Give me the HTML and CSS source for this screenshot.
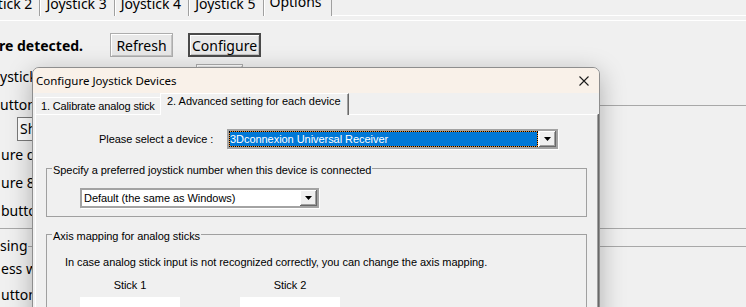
FILE: index.html
```html
<!DOCTYPE html>
<html lang="en">
<head>
  <meta charset="UTF-8">
  <title>Joystick Options</title>
  <link rel="stylesheet" href="styles.css">
</head>
<body>

  <div class="tabbar">
    <div class="tab first">Joystick 2</div>
    <div class="tab">Joystick 3</div>
    <div class="tab">Joystick 4</div>
    <div class="tab">Joystick 5</div>
    <div class="tab active">Options</div>
    <div class="tab-fill"></div>
  </div>

  <div class="panel">
    <div class="row-status">
      <span class="status">re detected.</span>
      <button class="btn refresh">Refresh</button>
      <button class="btn configure">Configure</button>
    </div>

    <div class="row-number">
      <span class="number-label">ystick</span>
      <button class="btn small"></button>
    </div>

    <fieldset class="group buttons">
      <legend>uttons</legend>
      <div class="mini-combo">Sho</div>
      <div class="line">ure de</div>
      <div class="line">ure 8-w</div>
      <div class="line">button</div>
    </fieldset>

    <fieldset class="group pressing">
      <legend>sing</legend>
      <div class="line short">ess wh</div>
      <div class="line short">utton</div>
    </fieldset>
  </div>

  <div class="dialog">
    <div class="titlebar">
      <span class="title">Configure Joystick Devices</span>
      <svg class="close" width="10" height="10" viewBox="0 0 10 10">
        <path d="M0.5 0.5 L9.5 9.5 M9.5 0.5 L0.5 9.5" stroke="#1b1b1b" stroke-width="1.1" fill="none"/>
      </svg>
    </div>

    <div class="dtabs">
      <div class="dtab">1. Calibrate analog stick</div>
      <div class="dtab selected">2. Advanced setting for each device</div>
    </div>

    <div class="dpanel">
      <div class="device-row">
        <span class="device-label">Please select a device :</span>
        <div class="combo wide">
          <div class="combo-field focused">3Dconnexion Universal Receiver</div>
          <div class="combo-btn">
            <svg width="7" height="4" viewBox="0 0 7 4"><polygon points="0,0 7,0 3.5,4" fill="#000"/></svg>
          </div>
        </div>
      </div>

      <fieldset class="dgroup preferred">
        <legend>Specify a preferred joystick number when this device is connected</legend>
        <div class="combo narrow">
          <div class="combo-field">Default (the same as Windows)</div>
          <div class="combo-btn">
            <svg width="7" height="4" viewBox="0 0 7 4"><polygon points="0,0 7,0 3.5,4" fill="#000"/></svg>
          </div>
        </div>
      </fieldset>

      <fieldset class="dgroup axis">
        <legend>Axis mapping for analog sticks</legend>
        <p class="hint">In case analog stick input is not recognized correctly, you can change the axis mapping.</p>
        <div class="sticks">
          <div class="stick">
            <div class="stick-name">Stick 1</div>
            <div class="stick-box"></div>
          </div>
          <div class="stick">
            <div class="stick-name">Stick 2</div>
            <div class="stick-box"></div>
          </div>
        </div>
      </fieldset>
    </div>
  </div>

</body>
</html>
```

FILE: styles.css
```css
body {
  margin: 0;
  height: 307px;
  overflow: hidden;
  position: relative;
  background-color: #f0f0f0;
  font-family: "Noto Sans", "Open Sans", sans-serif;
  font-size: 14px;
  color: #000;
}

/* main window tabs */
.tabbar {
  display: flex;
  height: 20px;
  margin-top: -4px;
  margin-left: -34px;
}

.tab {
  padding: 0 7px 0 6px;
  line-height: 16px;
  border-right: 1px solid #a0a0a0;
  box-shadow: inset 1px 0 #fff;
  white-space: nowrap;
}

.tab.active {
  margin-top: -2px;
  padding: 0 9px 0 6px;
}

.tab-fill {
  flex: 1;
  border-bottom: 1px solid #fff;
}

.panel {
  margin-top: 4px;
  border-top: 1px solid #fff;
}

.row-status {
  display: flex;
  align-items: center;
  height: 24px;
  margin-top: 12px;
}

.status {
  width: 111px;
  margin-left: -1px;
  font-weight: 700;
  white-space: nowrap;
}

.btn {
  height: 24px;
  box-sizing: border-box;
  padding: 0;
  font-family: inherit;
  font-size: 14px;
  color: #000;
  background-color: #e9e9e9;
  border: 1px solid #adadad;
  box-shadow: inset 1px 1px #fff, inset -1px -1px #c4c4c4;
}

.refresh {
  width: 63px;
}

.configure {
  width: 73px;
  margin-left: 15px;
  border: 2px solid #4a4a4a;
}

.row-number {
  display: flex;
  align-items: center;
  height: 24px;
  margin-top: 7px;
}

.number-label {
  width: 196px;
  white-space: nowrap;
}

.btn.small {
  width: 47px;
}

/* main window group boxes */
.group {
  margin: 9px -20px 0 -20px;
  padding: 0 20px 3px 20px;
  border: 1px solid #a8a8a8;
}

.group legend {
  padding: 0;
  margin-left: -1px;
  line-height: 16px;
}

.mini-combo {
  width: 120px;
  height: 24px;
  box-sizing: border-box;
  margin: 4px 0 0 16px;
  padding-left: 2px;
  line-height: 22px;
  background-color: #fff;
  border: 1px solid #7a7a7a;
}

.line {
  height: 28px;
  line-height: 28px;
  white-space: nowrap;
}

.pressing {
  margin-top: 9px;
}

.line.short {
  height: 26px;
  line-height: 26px;
}

.pressing .line.short:first-of-type {
  margin-top: 2px;
}

/* dialog */
.dialog {
  position: absolute;
  left: 32px;
  top: 67px;
  width: 566px;
  height: 270px;
  background-color: #f0f0f0;
  border: 1px solid #8e8e8e;
  border-radius: 7px 7px 0 0;
  box-shadow: 0 6px 26px rgba(0, 0, 0, 0.28);
  font-family: "Liberation Sans", Arial, sans-serif;
  font-size: 11px;
  letter-spacing: -0.05px;
}

.titlebar {
  display: flex;
  align-items: center;
  height: 25px;
  padding-left: 3px;
  background-color: #f9f1e9;
  border-radius: 6px 6px 0 0;
}

.title {
  font-family: "Noto Sans", "Open Sans", sans-serif;
  font-size: 11.5px;
  letter-spacing: 0;
}

.close {
  margin-left: auto;
  margin-right: 10px;
}

.dtabs {
  display: flex;
  align-items: flex-end;
  height: 21px;
  padding-left: 2px;
}

.dtab {
  height: 17px;
  box-sizing: border-box;
  padding: 2px 0 0 5px;
  line-height: 13px;
  letter-spacing: -0.15px;
  border-top: 1px solid #fff;
  border-left: 1px solid #fff;
  white-space: nowrap;
}

.dtab:first-child {
  width: 125px;
}

.dtab.selected {
  position: relative;
  width: 189px;
  height: 22px;
  margin-bottom: -1px;
  padding: 1px 0 0 6px;
  letter-spacing: 0;
  background-color: #f0f0f0;
  border-right: 1px solid #696969;
  box-shadow: inset -1px 0 #a0a0a0;
}

.dpanel {
  height: 240px;
  margin: 0 1px 0 2px;
  border-top: 1px solid #fff;
  border-left: 1px solid #fff;
  border-right: 1px solid #a0a0a0;
  box-shadow: 1px 0 #696969;
}

.device-row {
  display: flex;
  align-items: center;
  padding: 14px 0 0 63px;
}

.device-label {
  width: 128px;
  white-space: nowrap;
}

.combo {
  display: flex;
  height: 20px;
  box-sizing: border-box;
  border: 2px solid #a3a3a3;
  background-color: #fff;
  box-shadow: 1px 1px #fff;
}

.combo.wide {
  width: 331px;
}

.combo.narrow {
  width: 239px;
  margin: 11px 0 0 28px;
}

.combo-field {
  flex: 1;
  padding-left: 2px;
  line-height: 16px;
  white-space: nowrap;
  overflow: hidden;
}

.combo-field.focused {
  margin-right: 1px;
  padding-left: 0;
  line-height: 14px;
  color: #fff;
  border: 1px dotted #000;
  background: linear-gradient(#0078d7, #0078d7) padding-box, #f0902c border-box;
}

.combo-btn {
  display: flex;
  align-items: center;
  justify-content: center;
  width: 17px;
  box-sizing: border-box;
  background-color: #f0f0f0;
  border-right: 1px solid #696969;
  border-bottom: 1px solid #696969;
  box-shadow: inset 1px 1px #fff, inset -1px -1px #a0a0a0;
}

.dgroup {
  margin: 10px 10px 0 10px;
  padding: 0 5px 8px 5px;
  border: 1px solid #a0a0a0;
}

.dgroup legend {
  padding: 4px 1px 0 1px;
  line-height: 14px;
}

.axis {
  margin-top: 8px;
}

.hint {
  margin: 12px 0 0 13px;
  line-height: 14px;
  white-space: nowrap;
}

.sticks {
  display: flex;
  gap: 60px;
  margin: 9px 0 0 28px;
}

.stick {
  width: 100px;
}

.stick-name {
  line-height: 14px;
  text-align: center;
}

.stick-box {
  height: 40px;
  margin-top: 5px;
  background-color: #fff;
}
```
